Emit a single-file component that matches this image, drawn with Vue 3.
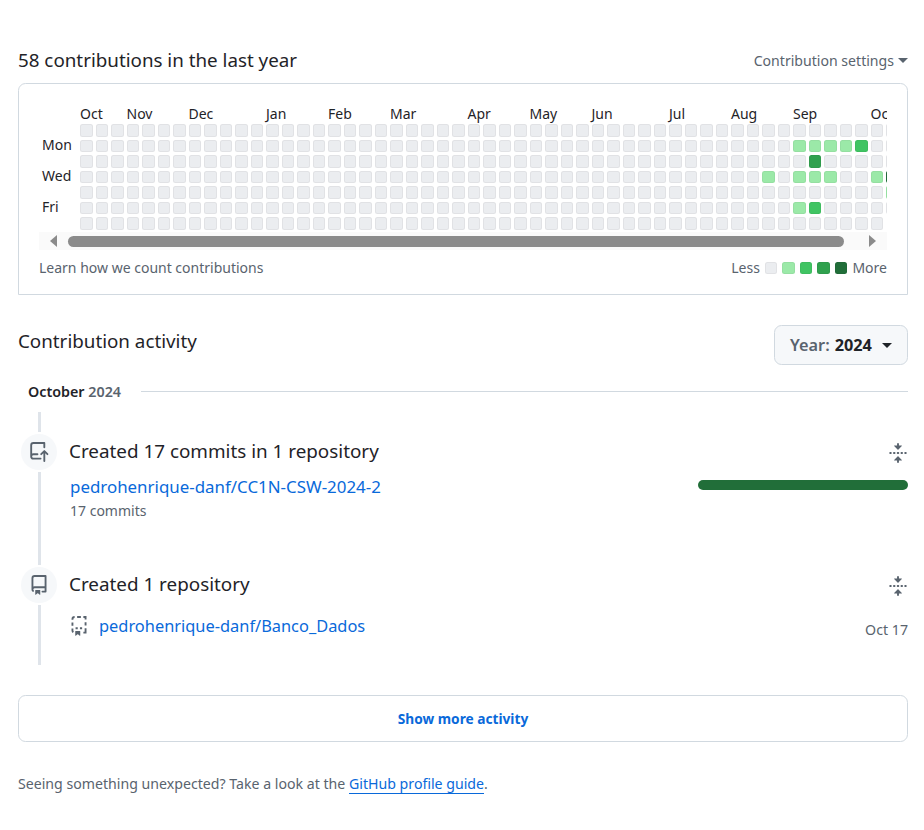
<template>
  <div class="page">
    <div class="title-row">
      <h2 class="title">58 contributions in the last year</h2>
      <div class="settings">Contribution settings <span class="caret small"></span></div>
    </div>

    <div class="calendar">
      <div class="chart">
        <div class="days">
          <span
            v-for="d in dayLabels"
            :key="d.name"
            class="day"
            :style="{ gridRowStart: d.row + 2 }"
          >{{ d.name }}</span>
        </div>
        <div class="grid">
          <span
            v-for="m in months"
            :key="m.col"
            class="month"
            :style="{ gridColumnStart: m.col + 1 }"
          >{{ m.name }}</span>
          <template v-for="(row, r) in 7" :key="r">
            <template v-for="(col, c) in 53" :key="c">
              <i
                v-if="!(c === 52 && r === 6)"
                class="cell"
                :class="'l' + level(r, c)"
                :style="{ gridRowStart: r + 2, gridColumnStart: c + 1 }"
              ></i>
            </template>
          </template>
        </div>
      </div>
      <div class="scrollbar">
        <span class="arrow left"></span>
        <span class="thumb"></span>
        <span class="arrow right"></span>
      </div>
      <div class="calendar-foot">
        <span>Learn how we count contributions</span>
        <div class="legend">
          <span class="less">Less</span>
          <i class="cell l0"></i>
          <i class="cell l1"></i>
          <i class="cell l2"></i>
          <i class="cell l3"></i>
          <i class="cell l4"></i>
          <span class="more">More</span>
        </div>
      </div>
    </div>

    <div class="activity-head">
      <h2 class="activity-title">Contribution activity</h2>
      <button class="year-btn"><span class="year-label">Year:</span> <b>2024</b> <span class="caret"></span></button>
    </div>

    <div class="month-row">
      <span class="month-name"><b>October</b> <span>2024</span></span>
      <span class="month-line"></span>
    </div>

    <div class="timeline">
      <div class="item first">
        <div class="rail">
          <span class="seg top"></span>
          <span class="badge">
            <svg viewBox="0 0 16 16" width="20" height="20"><path d="M1 2.5A2.5 2.5 0 0 1 3.5 0h8.75a.75.75 0 0 1 .75.75v3.5a.75.75 0 0 1-1.5 0V1.5h-8a1 1 0 0 0-1 1v6.708A2.493 2.493 0 0 1 3.5 9h3.25a.75.75 0 0 1 0 1.5H3.5a1 1 0 0 0 0 2h5.75a.75.75 0 0 1 0 1.5H3.5A2.5 2.5 0 0 1 1 11.5Zm13.23 7.79h-.001l-1.224-1.224v6.184a.75.75 0 0 1-1.5 0V9.066L10.28 10.29a.75.75 0 0 1-1.06-1.061l2.505-2.504a.75.75 0 0 1 1.06 0L15.29 9.23a.751.751 0 0 1-.018 1.042.751.751 0 0 1-1.042.018Z" /></svg>
          </span>
          <span class="seg grow"></span>
        </div>
        <div class="content">
          <div class="head-row">
            <h3>Created 17 commits in 1 repository</h3>
            <svg class="fold" viewBox="0 0 16 16" width="20" height="20"><path :d="foldPath" /></svg>
          </div>
          <div class="repo-row">
            <a class="link">pedrohenrique-danf/CC1N-CSW-2024-2</a>
            <span class="bar"></span>
          </div>
          <div class="commits">17 commits</div>
        </div>
      </div>

      <div class="item second">
        <div class="rail">
          <span class="badge">
            <svg viewBox="0 0 16 16" width="20" height="20"><path d="M2 2.5A2.5 2.5 0 0 1 4.5 0h8.75a.75.75 0 0 1 .75.75v12.5a.75.75 0 0 1-.75.75h-2.5a.75.75 0 0 1 0-1.5h1.75v-2h-8a1 1 0 0 0-.714 1.7.75.75 0 1 1-1.072 1.05A2.495 2.495 0 0 1 2 11.5Zm10.5-1h-8a1 1 0 0 0-1 1v6.708A2.486 2.486 0 0 1 4.5 9h8ZM5 12.25a.25.25 0 0 1 .25-.25h3.5a.25.25 0 0 1 .25.25v3.25a.25.25 0 0 1-.4.2l-1.45-1.087a.249.249 0 0 0-.3 0L5.4 15.7a.25.25 0 0 1-.4-.2Z" /></svg>
          </span>
          <span class="seg grow"></span>
        </div>
        <div class="content">
          <div class="head-row">
            <h3>Created 1 repository</h3>
            <svg class="fold" viewBox="0 0 16 16" width="20" height="20"><path :d="foldPath" /></svg>
          </div>
          <div class="new-repo">
            <svg class="template" viewBox="0 0 16 16" width="20" height="20">
              <path class="dash" d="M2.75 3v-.5A1.75 1.75 0 0 1 4.5.75M6.5.75h3M11.5.75h1.75V2.75M13.25 5v2.5M13.25 9.75v3.5H11.5M2.75 5.25v2.5M2.75 10v1.5c0 .6.3 1.1.7 1.4M5.25 9.75h1.75M8.75 9.75h1.75" />
              <path d="M5 12.25a.25.25 0 0 1 .25-.25h3.5a.25.25 0 0 1 .25.25v3.25a.25.25 0 0 1-.4.2l-1.45-1.087a.249.249 0 0 0-.3 0L5.4 15.7a.25.25 0 0 1-.4-.2Z" />
            </svg>
            <a class="link">pedrohenrique-danf/Banco_Dados</a>
            <span class="date">Oct 17</span>
          </div>
        </div>
      </div>
    </div>

    <button class="show-more">Show more activity</button>

    <p class="guide">Seeing something unexpected? Take a look at the <a>GitHub profile guide</a>.</p>
  </div>
</template>

<script setup>
const dayLabels = [
  { name: 'Mon', row: 1 },
  { name: 'Wed', row: 3 },
  { name: 'Fri', row: 5 },
]

const months = [
  { name: 'Oct', col: 0 },
  { name: 'Nov', col: 3 },
  { name: 'Dec', col: 7 },
  { name: 'Jan', col: 12 },
  { name: 'Feb', col: 16 },
  { name: 'Mar', col: 20 },
  { name: 'Apr', col: 25 },
  { name: 'May', col: 29 },
  { name: 'Jun', col: 33 },
  { name: 'Jul', col: 38 },
  { name: 'Aug', col: 42 },
  { name: 'Sep', col: 46 },
  { name: 'Oct', col: 51 },
]

// row-column => level
const active = {
  '1-46': 1, '1-47': 1, '1-48': 1, '1-49': 1, '1-50': 2,
  '2-47': 3,
  '3-44': 1, '3-46': 1, '3-47': 1, '3-48': 1, '3-51': 1, '3-52': 4,
  '4-52': 1,
  '5-46': 1, '5-47': 2,
}

const level = (r, c) => active[r + '-' + c] || 0

const foldPath = 'M10.896 2H8.75V.75a.75.75 0 0 0-1.5 0V2H5.104a.25.25 0 0 0-.177.427l2.896 2.896a.25.25 0 0 0 .354 0l2.896-2.896A.25.25 0 0 0 10.896 2ZM8.75 15.25a.75.75 0 0 1-1.5 0V14H5.104a.25.25 0 0 1-.177-.427l2.896-2.896a.25.25 0 0 1 .354 0l2.896 2.896a.25.25 0 0 1-.177.427H8.75v1.25Zm-6.5-6.5a.75.75 0 0 0 0-1.5h-.5a.75.75 0 0 0 0 1.5h.5ZM6 8a.75.75 0 0 1-.75.75h-.5a.75.75 0 0 1 0-1.5h.5A.75.75 0 0 1 6 8Zm2.25.75a.75.75 0 0 0 0-1.5h-.5a.75.75 0 0 0 0 1.5h.5ZM12 8a.75.75 0 0 1-.75.75h-.5a.75.75 0 0 1 0-1.5h.5A.75.75 0 0 1 12 8Zm2.25.75a.75.75 0 0 0 0-1.5h-.5a.75.75 0 0 0 0 1.5h.5Z'
</script>

<style scoped>
.page {
  padding: 45px 16px 0 18px;
  font-family: "Noto Sans", "Open Sans", sans-serif;
  color: #1f2328;
  background: #fff;
}

.title-row {
  display: flex;
  justify-content: space-between;
  align-items: center;
  height: 30px;
  margin-bottom: 8px;
}

.title,
.activity-title {
  margin: 0;
  font-size: 18.8px;
  font-weight: 400;
  line-height: 30px;
}

.settings {
  font-size: 14.1px;
  color: #59636e;
  display: flex;
  align-items: center;
  gap: 4px;
}

.caret {
  display: inline-block;
  width: 0;
  height: 0;
  border-left: 5px solid transparent;
  border-right: 5px solid transparent;
  border-top: 5px solid #1f2328;
}

.caret.small {
  border-top-color: #59636e;
}

.calendar {
  height: 212px;
  box-sizing: border-box;
  padding: 20px 20px 0;
  border: 1px solid #d1d9e0;
  border-radius: 7.5px 7.5px 0 0;
}

.chart {
  display: flex;
  width: 848px;
  overflow: hidden;
}

.days {
  flex: none;
  width: 41px;
  display: grid;
  grid-template-rows: 17px repeat(7, 12.5px);
  row-gap: 3px;
  padding-left: 3px;
  box-sizing: border-box;
}

.day {
  font-size: 14px;
  line-height: 10.5px;
  color: #1f2328;
  white-space: nowrap;
}

.grid {
  flex: none;
  display: grid;
  grid-template-columns: repeat(53, 12.5px);
  grid-template-rows: 17px repeat(7, 12.5px);
  gap: 3px;
}

.month {
  grid-row-start: 1;
  grid-column-end: span 3;
  font-size: 14px;
  line-height: 19px;
  white-space: nowrap;
}

.cell {
  display: block;
  width: 12.5px;
  height: 12.5px;
  box-sizing: border-box;
  border-radius: 2.5px;
  border: 1px solid rgba(31, 35, 40, 0.05);
}

.l0 { background: #ebedf0; }
.l1 { background: #9be9a8; }
.l2 { background: #40c463; }
.l3 { background: #30a14e; }
.l4 { background: #216e39; }

.scrollbar {
  width: 848px;
  height: 18px;
  margin-top: 2.5px;
  background: #fafafa;
  display: flex;
  align-items: center;
  position: relative;
}

.thumb {
  margin-left: 29px;
  width: 776px;
  height: 11px;
  border-radius: 6px;
  background: #8b8b8b;
}

.arrow {
  width: 0;
  height: 0;
  border-top: 6px solid transparent;
  border-bottom: 6px solid transparent;
}

.arrow.left {
  position: absolute;
  left: 11px;
  border-right: 7px solid #8b8b8b;
}

.arrow.right {
  position: absolute;
  left: 830px;
  border-left: 7px solid #8b8b8b;
}

.calendar-foot {
  width: 848px;
  display: flex;
  justify-content: space-between;
  align-items: center;
  margin-top: 8px;
  font-size: 14px;
  line-height: 20px;
  color: #59636e;
}

.legend {
  display: flex;
  align-items: center;
  gap: 5px;
}

.less,
.more {
  color: #59636e;
}

.activity-head {
  display: flex;
  justify-content: space-between;
  align-items: flex-start;
  margin-top: 30px;
}

.activity-title {
  line-height: 32px;
}

.year-btn {
  width: 134px;
  height: 40px;
  font: inherit;
  font-size: 16.3px;
  font-weight: 600;
  color: #59636e;
  background: #f6f8fa;
  border: 1px solid #d1d9e0;
  border-radius: 7.5px;
  display: flex;
  align-items: center;
  justify-content: center;
  gap: 5px;
}

.year-btn b {
  color: #1f2328;
  font-weight: 700;
}

.year-btn .caret {
  margin-left: 5px;
}

.month-row {
  display: flex;
  align-items: center;
  height: 20px;
  margin-top: 16px;
  padding-left: 10px;
  gap: 20px;
}

.month-name {
  font-size: 14.3px;
  font-weight: 600;
  color: #59636e;
  white-space: nowrap;
}

.month-name b {
  font-weight: 600;
  color: #1f2328;
}

.month-line {
  flex: 1;
  height: 1px;
  background: #d1d9e0;
}

.timeline {
  margin-top: 11px;
}

.item {
  display: flex;
}

.item.first {
  height: 153px;
}

.item.second {
  height: 100px;
}

.rail {
  flex: none;
  width: 36px;
  margin: 0 12px 0 3px;
  display: flex;
  flex-direction: column;
  align-items: center;
}

.seg {
  width: 3px;
  background: #dfe4ea;
}

.seg.top {
  height: 20px;
}

.seg.grow {
  flex: 1;
}

.badge {
  flex: none;
  width: 36px;
  height: 36px;
  margin: 2px 0;
  border-radius: 50%;
  background: #f6f8fa;
  display: flex;
  align-items: center;
  justify-content: center;
}

.badge svg,
.fold,
.template {
  fill: #59636e;
}

.template .dash {
  fill: none;
  stroke: #59636e;
  stroke-width: 1.5;
}

.fold {
  margin-top: 4px;
}

.content {
  flex: 1;
  min-width: 0;
}

.first .content {
  padding-top: 24px;
}

.second .content {
  padding-top: 4px;
}

.head-row {
  display: flex;
  justify-content: space-between;
  align-items: center;
  height: 30px;
}

.head-row h3 {
  margin: 0;
  font-size: 18.85px;
  font-weight: 400;
  line-height: 30px;
}

.repo-row {
  display: flex;
  justify-content: space-between;
  align-items: flex-start;
  height: 24px;
  margin-top: 9px;
}

.link {
  color: #0969da;
  font-size: 16.9px;
  line-height: 24px;
  white-space: nowrap;
}

.repo-row .link {
  margin-left: 1px;
}

.bar {
  width: 210px;
  height: 10px;
  margin-top: 5px;
  border-radius: 5px;
  background: #216e39;
}

.commits {
  margin-top: 2px;
  margin-left: 1px;
  font-size: 14px;
  line-height: 20px;
  color: #59636e;
}

.new-repo {
  display: flex;
  align-items: center;
  height: 24px;
  margin-top: 15px;
}

.template {
  margin-right: 10px;
}

.new-repo .link {
  flex: 1;
  font-size: 16.4px;
}

.date {
  font-size: 14.2px;
  color: #59636e;
  padding-top: 6px;
}

.show-more {
  display: block;
  width: 100%;
  height: 47px;
  margin-top: 30px;
  font: inherit;
  font-size: 13.7px;
  font-weight: 700;
  color: #0969da;
  background: #fff;
  border: 1px solid #d1d9e0;
  border-radius: 7.5px;
}

.guide {
  margin: 32px 0 0;
  font-size: 14.15px;
  line-height: 20px;
  color: #59636e;
}

.guide a {
  color: #0969da;
  border-bottom: 1px solid #0969da;
}
</style>
